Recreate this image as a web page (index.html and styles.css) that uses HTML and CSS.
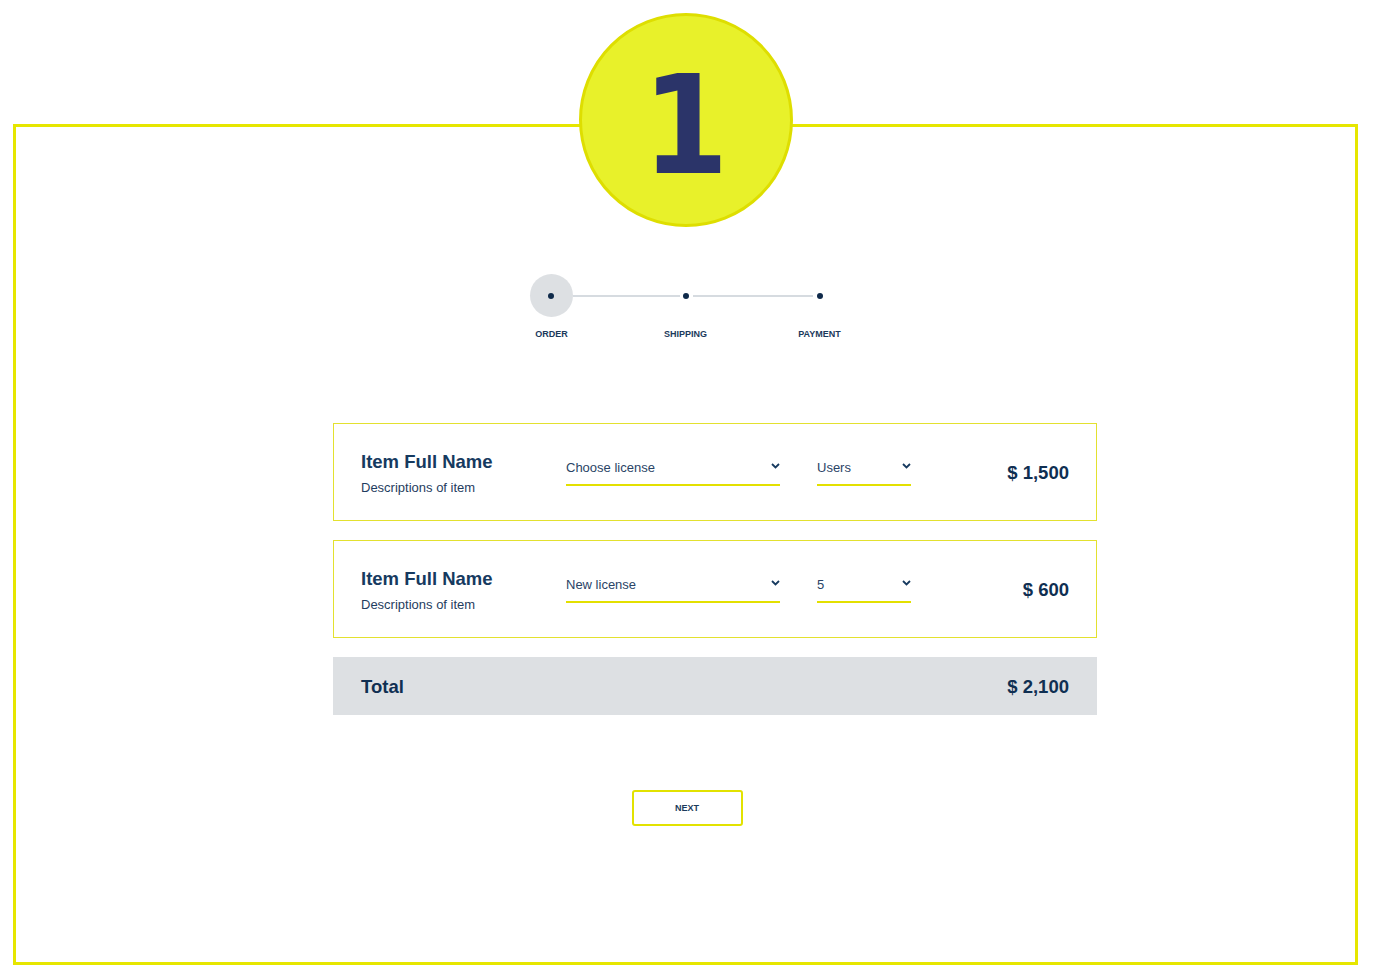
FILE: index.html
```html
<!DOCTYPE html>
<html lang="en">
<head>
<meta charset="utf-8">
<title>Checkout - Order</title>
<link rel="stylesheet" href="styles.css">
</head>
<body>
<div class="frame">
  <div class="badge"><span class="badge-num">1</span></div>

  <div class="stepper">
    <div class="track">
      <div class="node-big"><span class="dot"></span></div>
      <span class="line line-a"></span>
      <span class="dot dot-sm"></span>
      <span class="line line-b"></span>
      <span class="dot dot-sm dot-last"></span>
    </div>
    <div class="labels">
      <span class="label">ORDER</span>
      <span class="label">SHIPPING</span>
      <span class="label">PAYMENT</span>
    </div>
  </div>

  <div class="order">
    <div class="card">
      <div class="info">
        <div class="item-name">Item Full Name</div>
        <div class="item-desc">Descriptions of item</div>
      </div>
      <div class="select select-license">
        <span>Choose license</span>
        <svg class="chev" width="9" height="6" viewBox="0 0 9 6"><polyline points="1,1 4.5,4.5 8,1" fill="none" stroke="#163a5f" stroke-width="1.8"/></svg>
      </div>
      <div class="select select-users">
        <span>Users</span>
        <svg class="chev" width="9" height="6" viewBox="0 0 9 6"><polyline points="1,1 4.5,4.5 8,1" fill="none" stroke="#163a5f" stroke-width="1.8"/></svg>
      </div>
      <div class="price">$ 1,500</div>
    </div>

    <div class="card">
      <div class="info">
        <div class="item-name">Item Full Name</div>
        <div class="item-desc">Descriptions of item</div>
      </div>
      <div class="select select-license">
        <span>New license</span>
        <svg class="chev" width="9" height="6" viewBox="0 0 9 6"><polyline points="1,1 4.5,4.5 8,1" fill="none" stroke="#163a5f" stroke-width="1.8"/></svg>
      </div>
      <div class="select select-users">
        <span>5</span>
        <svg class="chev" width="9" height="6" viewBox="0 0 9 6"><polyline points="1,1 4.5,4.5 8,1" fill="none" stroke="#163a5f" stroke-width="1.8"/></svg>
      </div>
      <div class="price">$ 600</div>
    </div>

    <div class="total">
      <span class="total-label">Total</span>
      <span class="total-value">$ 2,100</span>
    </div>
  </div>

  <div class="actions">
    <button class="next" type="button">NEXT</button>
  </div>
</div>
</body>
</html>
```

FILE: styles.css
```css
html, body {
  margin: 0;
  padding: 0;
  background: #ffffff;
}

body {
  font-family: "Liberation Sans", Arial, sans-serif;
  color: #163a5f;
}

.frame {
  position: relative;
  box-sizing: border-box;
  margin: 124px 0 0 13px;
  width: 1345px;
  height: 841px;
  border: 3px solid #e6e600;
  padding-top: 147px;
}

.badge {
  position: absolute;
  top: -114px;
  left: 50%;
  transform: translateX(-50%);
  box-sizing: border-box;
  width: 214px;
  height: 214px;
  border-radius: 50%;
  background: #e8f12a;
  border: 3px solid #dede00;
  display: flex;
  align-items: center;
  justify-content: center;
  padding-top: 12px;
}

.badge-num {
  font-family: "DejaVu Sans Condensed", "DejaVu Sans", sans-serif;
  font-weight: 700;
  font-size: 138px;
  line-height: 1;
  color: #2b3469;
}

/* Stepper */
.stepper {
  width: 402px;
  margin: 0 auto;
}

.track {
  display: flex;
  align-items: center;
  height: 43px;
  padding-left: 45px;
}

.node-big {
  width: 43px;
  height: 43px;
  border-radius: 50%;
  background: #dde0e3;
  display: flex;
  align-items: center;
  justify-content: center;
  flex: none;
}

.dot {
  display: block;
  width: 6px;
  height: 6px;
  border-radius: 50%;
  background: #0f2a4a;
  flex: none;
}

.line {
  display: block;
  height: 2px;
  background: #d6dbe0;
  flex: none;
}

.line-a {
  width: 107px;
  margin-right: 3px;
}

.line-b {
  width: 120px;
  margin-left: 4px;
  margin-right: 4px;
}

.labels {
  display: grid;
  grid-template-columns: repeat(3, 134px);
  margin-top: 12px;
}

.label {
  text-align: center;
  font-size: 9px;
  font-weight: 700;
  line-height: 11px;
  color: #1b3a5c;
}

/* Order */
.order {
  width: 764px;
  margin: 83px 0 0 317px;
}

.card {
  box-sizing: border-box;
  height: 98px;
  border: 1px solid #e3e12f;
  display: flex;
  align-items: center;
  padding: 0 27px;
}

.card + .card {
  margin-top: 19px;
}

.info {
  width: 205px;
  flex: none;
  padding-top: 2px;
}

.item-name {
  font-size: 18.5px;
  font-weight: 700;
  line-height: 22px;
  color: #163a5f;
}

.item-desc {
  font-size: 13px;
  line-height: 16px;
  margin-top: 7px;
  color: #1f3d60;
}

.select {
  box-sizing: border-box;
  display: flex;
  align-items: center;
  justify-content: space-between;
  border-bottom: 2px solid #e3e000;
  padding: 1px 0 8px;
  font-size: 13px;
  line-height: 16px;
  color: #2a4466;
  flex: none;
}

.select-license {
  width: 214px;
  margin-right: 37px;
}

.select-users {
  width: 94px;
}

.chev {
  display: block;
  margin-top: -3px;
}

.price {
  flex: 1;
  text-align: right;
  font-size: 18.5px;
  font-weight: 700;
  line-height: 22px;
  padding-top: 2px;
  color: #0f2f52;
}

.total {
  margin-top: 19px;
  height: 56px;
  background: #dde0e3;
  display: flex;
  align-items: center;
  justify-content: space-between;
  padding: 2px 28px 0;
  font-size: 18.5px;
  font-weight: 700;
  line-height: 22px;
  color: #0f2f52;
}

.actions {
  display: flex;
  justify-content: center;
  margin-top: 75px;
  padding-left: 3px;
}

.next {
  box-sizing: border-box;
  width: 111px;
  height: 36px;
  border: 2px solid #e2e200;
  border-radius: 3px;
  background: #ffffff;
  font-family: "Liberation Sans", Arial, sans-serif;
  font-size: 9px;
  font-weight: 700;
  color: #1b3a5c;
  padding: 0;
  cursor: pointer;
}
```
